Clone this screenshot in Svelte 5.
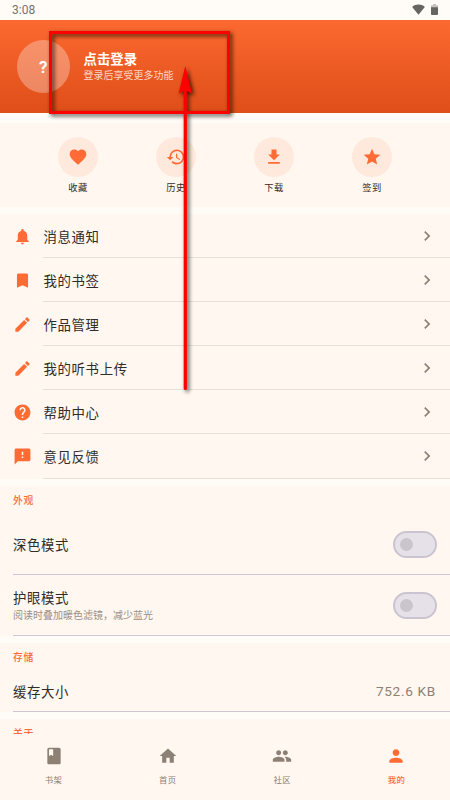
<script>
    const icons = {
        heart: "M12 21.35l-1.45-1.32C5.4 15.36 2 12.28 2 8.5 2 5.42 4.42 3 7.5 3c1.74 0 3.41.81 4.5 2.09C13.09 3.81 14.76 3 16.5 3 19.58 3 22 5.42 22 8.5c0 3.78-3.4 6.86-8.55 11.54L12 21.35z",
        history: "M13 3a9 9 0 0 0-9 9H1l3.89 3.89.07.14L9 12H6a7 7 0 1 1 2.06 4.94l-1.42 1.42A9 9 0 1 0 13 3zm-1 5v5l4.28 2.54.72-1.21-3.5-2.08V8H12z",
        download: "M19 9h-4V3H9v6H5l7 7 7-7zM5 18v2h14v-2H5z",
        star: "M12 17.27L18.18 21l-1.64-7.03L22 9.24l-7.19-.61L12 2 9.19 8.63 2 9.24l5.46 4.73L5.82 21z",
        bell: "M12 22c1.1 0 2-.9 2-2h-4c0 1.1.9 2 2 2zm6-6v-5c0-3.07-1.64-5.64-4.5-6.32V4c0-.83-.67-1.5-1.5-1.5s-1.5.67-1.5 1.5v.68C7.63 5.36 6 7.92 6 11v5l-2 2v1h16v-1l-2-2z",
        bookmark: "M17 3H7c-1.1 0-2 .9-2 2v16l7-3 7 3V5c0-1.1-.9-2-2-2z",
        edit: "M3 17.25V21h3.75L17.81 9.94l-3.75-3.75L3 17.25zM20.71 7.04a1 1 0 0 0 0-1.41l-2.34-2.34a1 1 0 0 0-1.41 0l-1.83 1.83 3.75 3.75 1.83-1.83z",
        help: "M12 2C6.48 2 2 6.48 2 12s4.48 10 10 10 10-4.48 10-10S17.52 2 12 2zm1 17h-2v-2h2v2zm2.07-7.75l-.9.92C13.45 12.9 13 13.5 13 15h-2v-.5c0-1.1.45-2.1 1.17-2.83l1.24-1.26c.37-.36.59-.86.59-1.41 0-1.1-.9-2-2-2s-2 .9-2 2H8c0-2.21 1.79-4 4-4s4 1.79 4 4c0 .88-.36 1.68-.93 2.25z",
        feedback: "M20 2H4c-1.1 0-1.99.9-1.99 2L2 22l4-4h14c1.1 0 2-.9 2-2V4c0-1.1-.9-2-2-2zm-7 12h-2v-2h2v2zm0-4h-2V6h2v4z",
        chevron: "M10 6L8.59 7.41 13.17 12l-4.58 4.59L10 18l6-6z",
        book: "M18 2H6c-1.1 0-2 .9-2 2v16c0 1.1.9 2 2 2h12c1.1 0 2-.9 2-2V4c0-1.1-.9-2-2-2zM6 4h5v8l-2.5-1.5L6 12V4z",
        home: "M10 20v-6h4v6h5v-8h3L12 3 2 12h3v8z",
        people: "M16 11c1.66 0 2.99-1.34 2.99-3S17.66 5 16 5s-3 1.34-3 3 1.34 3 3 3zm-8 0c1.66 0 2.99-1.34 2.99-3S9.66 5 8 5 5 6.34 5 8s1.34 3 3 3zm0 2c-2.33 0-7 1.17-7 3.5V19h14v-2.5c0-2.33-4.67-3.5-7-3.5zm8 0c-.29 0-.62.02-.97.05 1.16.84 1.97 1.97 1.97 3.45V19h6v-2.5c0-2.33-4.67-3.5-7-3.5z",
        person: "M12 12c2.21 0 4-1.79 4-4s-1.79-4-4-4-4 1.79-4 4 1.79 4 4 4zm0 2c-2.67 0-8 1.34-8 4v2h16v-2c0-2.66-5.33-4-8-4z",
    };

    const shortcuts = [
        { icon: "heart", label: "收藏" },
        { icon: "history", label: "历史" },
        { icon: "download", label: "下载" },
        { icon: "star", label: "签到" },
    ];

    const menu = [
        { icon: "bell", label: "消息通知" },
        { icon: "bookmark", label: "我的书签" },
        { icon: "edit", label: "作品管理" },
        { icon: "edit", label: "我的听书上传" },
        { icon: "help", label: "帮助中心" },
        { icon: "feedback", label: "意见反馈" },
    ];

    const tabs = [
        { icon: "book", label: "书架" },
        { icon: "home", label: "首页" },
        { icon: "people", label: "社区" },
        { icon: "person", label: "我的" },
    ];

    let activeTab = $state("我的");
    let darkMode = $state(false);
    let eyeCare = $state(false);
</script>

{#snippet icon(name)}
    <svg class="icon" viewBox="0 0 24 24" fill="currentColor"><path d={icons[name]} /></svg>
{/snippet}

<div class="screen">
    <div class="status-bar">
        <span class="clock">3:08</span>
        <svg class="wifi" viewBox="0 0 13 11"><path d="M0.2 3C3.5 -0.2 9.5 -0.2 12.8 3L6.5 10.8z" fill="#666562" /></svg>
        <svg class="battery" viewBox="0 0 7 11">
            <path d="M2 0h3v1.2h2V4H0V1.2h2z" fill="#c5c3bf" />
            <path d="M0 3.3h7V10q0 1-1 1H1q-1 0-1-1z" fill="#666562" />
        </svg>
    </div>

    <header class="profile">
        <div class="avatar">?</div>
        <div class="account">
            <div class="name">点击登录</div>
            <div class="hint">登录后享受更多功能</div>
        </div>
    </header>

    <main class="content">
        <section class="shortcuts">
            {#each shortcuts as item}
                <button class="shortcut">
                    <span class="bubble">{@render icon(item.icon)}</span>
                    <span class="shortcut-label">{item.label}</span>
                </button>
            {/each}
        </section>

        <section class="menu">
            {#each menu as item}
                <div class="menu-row">
                    <span class="menu-icon">{@render icon(item.icon)}</span>
                    <div class="menu-body">
                        <span class="label">{item.label}</span>
                        <span class="chevron">{@render icon("chevron")}</span>
                    </div>
                </div>
            {/each}
        </section>

        <section class="settings">
            <h3 class="section-title">外观</h3>
            <div class="setting dark">
                <span class="label">深色模式</span>
                <button class="switch" class:on={darkMode} aria-label="深色模式" onclick={() => (darkMode = !darkMode)}></button>
            </div>
            <div class="setting eye">
                <div>
                    <div class="label">护眼模式</div>
                    <div class="description">阅读时叠加暖色滤镜，减少蓝光</div>
                </div>
                <button class="switch" class:on={eyeCare} aria-label="护眼模式" onclick={() => (eyeCare = !eyeCare)}></button>
            </div>
        </section>

        <section class="settings">
            <h3 class="section-title">存储</h3>
            <div class="setting cache">
                <span class="label">缓存大小</span>
                <span class="value">752.6 KB</span>
            </div>
        </section>

        <section class="settings">
            <h3 class="section-title">关于</h3>
        </section>
    </main>

    <nav class="tabs">
        {#each tabs as tab}
            <button class="tab" class:active={tab.label === activeTab} onclick={() => (activeTab = tab.label)}>
                {@render icon(tab.icon)}
                <span>{tab.label}</span>
            </button>
        {/each}
    </nav>

    <!-- login pointer: red frame and arrow -->
    <svg class="pointer" viewBox="0 0 450 800">
        <rect x="50.5" y="32.5" width="178" height="80" fill="none" stroke="#f00" stroke-width="3" />
        <path d="M185.3 388.5V90" stroke="#f00" stroke-width="3.2" stroke-linecap="round" />
        <path d="M185.3 66L192 93.5L185.3 90.5L178.6 93.5z" fill="#f00" />
    </svg>
</div>

<style>
    :global(body) {
        margin: 0;
    }

    .screen {
        position: relative;
        display: flex;
        flex-direction: column;
        width: 450px;
        height: 800px;
        overflow: hidden;
        background-color: #fffbf6;
        color: #302c29;
        font-family: Roboto, "Noto Sans CJK SC", sans-serif;
    }

    button {
        padding: 0;
        border: none;
        background: none;
        color: inherit;
        font-family: inherit;
        cursor: pointer;
    }

    .icon {
        display: block;
        width: 20px;
        height: 20px;
    }

    .status-bar {
        display: flex;
        flex: none;
        align-items: center;
        box-sizing: border-box;
        height: 20px;
        padding: 0 12px;
        color: #74726f;
    }
    .clock {
        flex-grow: 1;
        font-size: 12px;
        line-height: 20px;
    }
    .wifi {
        width: 13px;
        height: 11px;
        margin: -2px 6px 0 0;
    }
    .battery {
        width: 7px;
        height: 11px;
        margin-top: -2px;
    }

    .profile {
        display: flex;
        flex: none;
        align-items: center;
        gap: 13.5px;
        box-sizing: border-box;
        height: 93px;
        padding-left: 16.5px;
        background: linear-gradient(#fc6930, #df4e19);
        color: #fff;
    }
    .avatar {
        width: 53.5px;
        height: 53.5px;
        border-radius: 50%;
        background-color: rgba(255, 255, 255, 0.3);
        font-size: 17px;
        font-weight: 700;
        line-height: 55px;
        text-align: center;
    }
    .account {
        padding-top: 2px;
    }
    .name {
        font-size: 13.4px;
        font-weight: 700;
        line-height: 17px;
    }
    .hint {
        color: rgba(255, 255, 255, 0.76);
        font-size: 10px;
        line-height: 16px;
    }

    .content {
        display: flex;
        flex-direction: column;
        flex: 1;
        gap: 7px;
        min-height: 0;
        padding-top: 10px;
        overflow: hidden;
    }
    section {
        flex: none;
        background-color: #fff7f0;
    }

    .shortcuts {
        display: flex;
        justify-content: space-around;
        box-sizing: border-box;
        height: 84px;
        padding: 13.6px 29px 0;
    }
    .shortcut {
        display: flex;
        flex-direction: column;
        align-items: center;
        width: 40px;
    }
    .bubble {
        display: flex;
        align-items: center;
        justify-content: center;
        width: 40px;
        height: 40px;
        border-radius: 50%;
        background-color: #ffe9dd;
        color: #ff6b35;
    }
    .shortcut-label {
        margin-top: 4px;
        font-size: 9.3px;
        letter-spacing: 0.5px;
        line-height: 13px;
    }

    .menu {
        height: 265px;
    }
    .menu-row {
        display: flex;
        height: 44.1px;
    }
    .menu-icon {
        display: flex;
        align-items: center;
        width: 43px;
        padding-left: 13px;
        box-sizing: border-box;
        color: #ff6b35;
    }
    .menu-icon .icon {
        width: 19px;
        height: 19px;
    }
    .menu-body {
        display: flex;
        flex: 1;
        align-items: center;
        justify-content: space-between;
        padding-right: 13.5px;
        border-bottom: 1px solid #e8dfd9;
    }
    .label {
        font-size: 13.4px;
        letter-spacing: 0.65px;
        line-height: 20px;
    }
    .menu-body .label {
        padding: 4px 0 0 0.5px;
    }
    .chevron {
        color: #8d8075;
    }

    .settings {
        padding-left: 13px;
    }
    .section-title {
        margin: 0;
        padding: 7px 0 6px;
        color: #ff6b35;
        font-size: 9.8px;
        font-weight: 500;
        letter-spacing: 0.8px;
        line-height: 15px;
    }
    .setting {
        display: flex;
        align-items: center;
        justify-content: space-between;
        box-sizing: border-box;
        padding-right: 13px;
        border-bottom: 1px solid #cdc6d3;
    }
    .setting.dark {
        height: 61px;
    }
    .dark .label {
        padding-top: 3px;
    }
    .setting.eye {
        height: 61px;
    }
    .eye .label {
        padding-top: 2px;
    }
    .setting.cache {
        height: 41px;
    }
    .cache .label {
        padding-top: 3px;
    }
    .description {
        color: #9b8f86;
        font-size: 10px;
        line-height: 14px;
    }
    .value {
        margin-right: 1px;
        color: #8d8075;
        font-size: 13.6px;
        letter-spacing: 0.7px;
    }

    .switch {
        display: flex;
        align-items: center;
        box-sizing: border-box;
        width: 44px;
        height: 27px;
        padding: 0 5px;
        border: 2px solid #cac4d0;
        border-radius: 14px;
        background-color: #e6e0e9;
    }
    .switch::before {
        content: "";
        width: 13px;
        height: 13px;
        border-radius: 50%;
        background-color: #cac4cd;
    }
    .switch.on {
        justify-content: flex-end;
    }

    .tabs {
        display: flex;
        flex: none;
        justify-content: space-between;
        height: 66px;
        background-color: #fff7f0;
    }
    .tab {
        display: flex;
        flex-direction: column;
        align-items: center;
        width: 107px;
        padding-top: 12px;
        color: #8d8075;
        font-size: 8.4px;
        letter-spacing: 0.4px;
        line-height: 12px;
    }
    .tab .icon {
        margin-bottom: 7.5px;
    }
    .tab.active {
        color: #ff6b35;
        font-weight: 500;
    }

    .pointer {
        position: absolute;
        inset: 0;
        width: 450px;
        height: 800px;
        pointer-events: none;
        filter: drop-shadow(2px 2px 2px rgba(0, 0, 0, 0.75));
    }
</style>
